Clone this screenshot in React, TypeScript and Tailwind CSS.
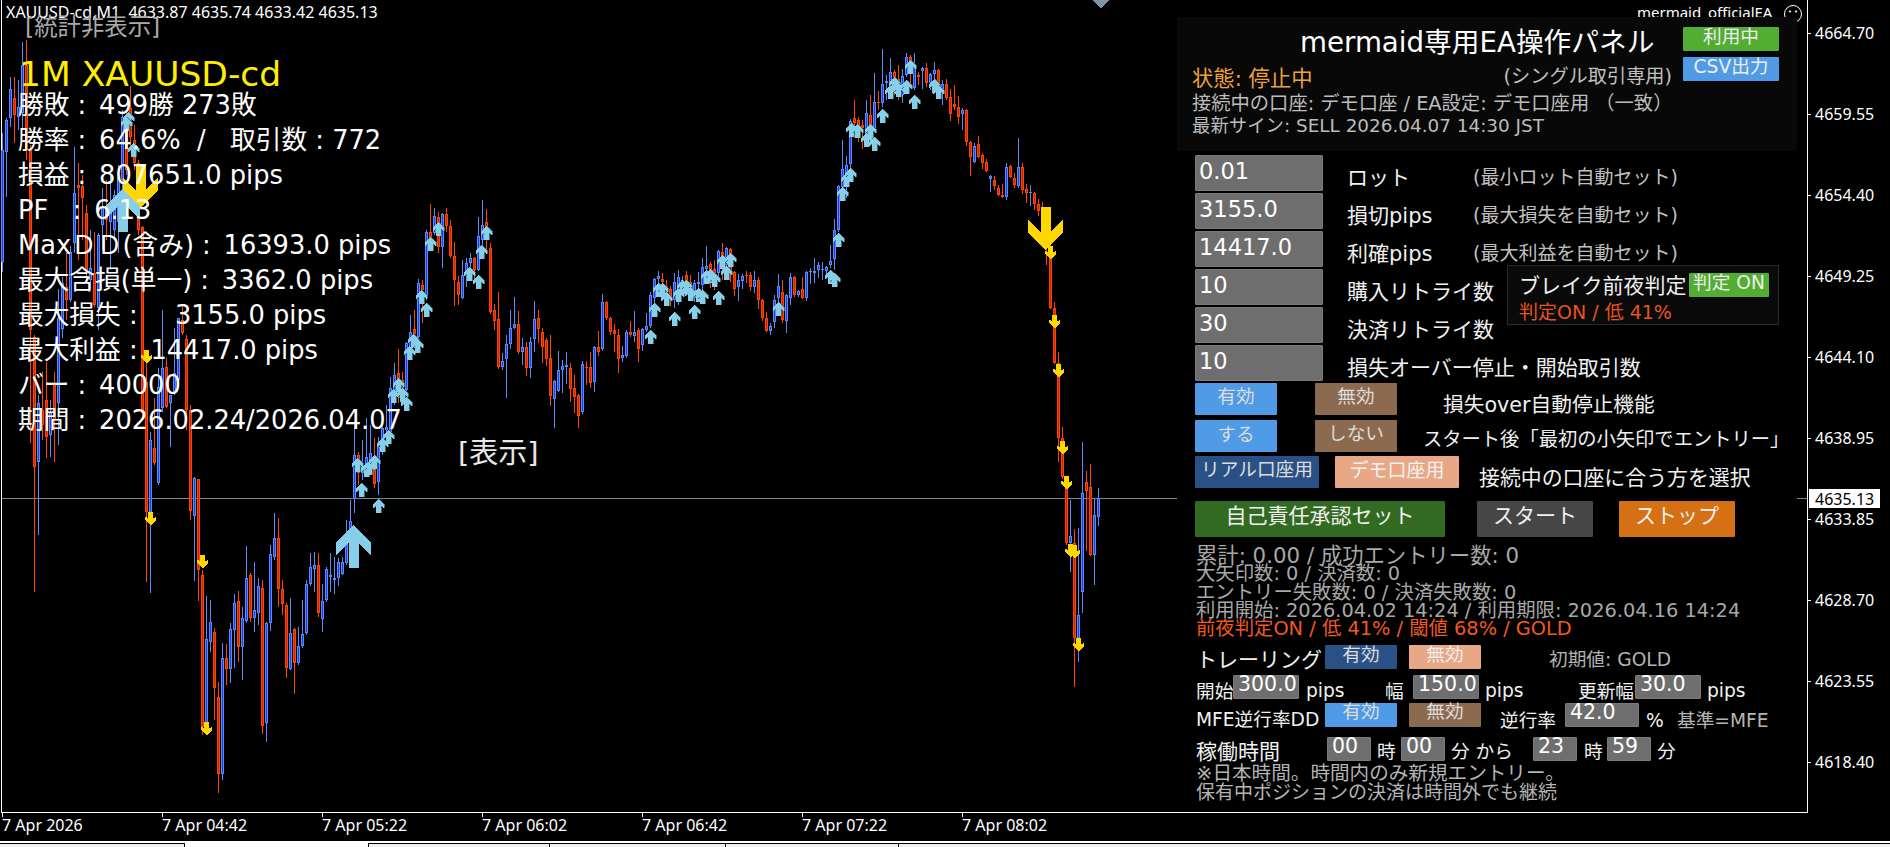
import { type ReactNode } from "react"

// x, high, body top, body bottom, low, 1 = up (blue) 0 = down (red)
const candles: number[][] = [
  [2,133,150,262,272,1],[6,118,120,152,197,1],[10,77,89,118,127,1],[14,77,98,115,143,0],[18,80,107,117,130,1],
  [22,42,65,113,130,1],[26,40,65,150,160,0],[30,145,150,330,443,0],[34,335,337,467,592,0],[38,395,403,462,535,1],
  [42,372,410,425,440,0],[46,362,400,437,458,0],[50,400,413,435,457,1],[54,372,385,420,462,0],[58,289,318,403,445,1],
  [62,277,283,329,338,1],[66,253,287,300,320,0],[70,246,252,300,302,1],[74,147,193,243,253,1],[78,163,185,188,260,0],
  [82,175,186,198,240,0],[86,205,213,270,280,0],[90,230,268,280,290,1],[94,232,273,305,307,0],[98,233,235,308,330,1],
  [102,188,208,225,250,1],[106,180,213,220,240,0],[110,170,207,222,270,1],[114,190,195,230,238,1],[118,165,177,222,253,1],
  [122,110,117,180,200,1],[126,110,130,170,175,0],[130,86,108,137,150,0],[134,125,140,163,170,0],[138,160,163,230,235,0],
  [142,226,227,413,420,0],[146,363,382,512,582,0],[150,432,440,512,593,1],[154,398,448,463,465,0],[158,368,387,483,485,1],
  [162,310,368,408,412,1],[166,358,367,407,408,0],[170,395,395,403,447,1],[174,328,373,393,395,1],[178,318,318,380,382,1],
  [182,307,320,333,335,0],[186,335,339,410,430,0],[190,405,410,511,520,0],[194,477,478,516,581,1],[198,479,479,570,601,0],
  [202,570,575,727,735,0],[206,596,639,723,728,1],[210,600,622,642,652,1],[214,628,632,688,720,0],[218,682,697,774,793,0],
  [222,643,658,774,780,1],[226,644,658,669,685,0],[230,623,629,669,683,1],[234,594,603,630,668,1],[238,591,601,647,662,0],
  [242,607,618,647,680,1],[246,546,578,621,623,1],[250,573,575,618,622,0],[254,562,610,618,632,1],[258,578,586,613,625,1],
  [262,580,588,726,734,0],[266,622,623,723,742,1],[270,545,554,623,631,1],[274,513,538,557,560,1],[278,518,538,589,607,0],
  [282,580,589,604,615,0],[286,603,605,668,678,0],[290,598,633,669,670,1],[294,628,629,663,694,0],[298,627,646,663,665,1],
  [302,600,634,646,648,1],[306,580,584,633,635,1],[310,553,567,584,586,1],[314,552,565,569,592,1],[318,553,565,613,617,0],
  [322,584,601,619,632,1],[326,567,569,600,602,1],[330,553,575,577,592,1],[334,557,578,580,594,1],[338,558,562,578,586,1],
  [342,557,562,574,575,1],[346,520,544,563,565,1],[350,500,521,545,547,1],[354,425,455,499,513,1],[358,452,455,473,485,0],
  [362,440,465,473,480,1],[366,418,457,470,472,1],[370,425,453,462,470,1],[374,438,457,484,488,0],[378,437,447,482,495,1],
  [382,427,428,443,455,1],[386,405,427,430,433,1],[390,377,388,433,435,1],[394,363,375,403,405,1],[398,349,373,383,403,0],
  [402,372,380,390,392,0],[406,342,343,390,392,1],[410,315,332,357,359,1],[414,310,329,334,336,0],[418,279,283,337,339,1],
  [422,280,285,290,323,0],[426,230,232,298,300,1],[430,204,232,238,240,0],[434,208,216,233,235,1],[438,212,217,247,253,0],
  [442,213,214,247,268,1],[446,208,214,226,232,0],[450,220,226,256,258,0],[454,242,256,280,306,0],[458,276,282,295,305,0],
  [462,260,275,298,299,1],[466,258,263,275,287,1],[470,253,258,263,280,1],[474,257,258,270,280,0],[478,217,236,270,271,1],
  [482,200,225,240,247,1],[486,209,222,239,253,0],[490,243,248,312,314,0],[494,304,310,321,330,0],[498,292,319,367,369,0],
  [502,353,361,367,370,1],[506,335,344,359,398,1],[510,310,328,344,349,1],[514,297,324,328,329,1],[518,311,324,352,354,0],
  [522,338,347,352,365,1],[526,342,347,368,376,0],[530,337,342,368,378,1],[534,301,319,339,352,1],[538,310,318,329,343,0],
  [542,328,332,347,363,0],[546,338,340,359,366,0],[550,335,358,396,406,0],[554,380,381,399,428,1],[558,351,370,391,392,1],
  [562,360,366,370,393,1],[566,352,365,367,384,1],[570,363,368,389,402,0],[574,375,388,397,413,0],[578,394,395,416,428,0],
  [582,361,364,412,414,1],[586,361,367,368,385,0],[590,352,367,383,388,0],[594,346,347,382,392,1],[598,331,347,352,356,0],
  [602,294,302,349,351,1],[606,301,302,318,320,0],[610,317,318,332,335,0],[614,324,330,334,352,0],[618,329,335,359,373,0],
  [622,346,355,358,362,1],[626,330,332,356,358,1],[630,321,332,335,337,0],[634,311,332,336,342,1],[638,328,330,349,362,0],
  [642,328,329,345,351,1],[646,313,326,330,332,1],[650,292,295,326,328,1],[654,278,279,298,312,1],[658,271,276,279,292,1],
  [662,273,279,282,295,0],[666,280,286,290,300,0],[670,286,289,300,306,0],[674,273,282,300,308,1],[678,270,277,290,305,1],
  [682,276,280,284,296,1],[686,271,275,281,293,0],[690,275,282,292,300,0],[694,280,283,298,302,1],[698,272,282,284,297,1],
  [702,258,267,285,290,1],[706,246,266,269,284,1],[710,262,264,282,288,0],[714,260,269,282,290,0],[718,250,251,273,282,1],
  [722,243,252,265,280,0],[726,247,248,265,270,1],[730,248,249,270,282,0],[734,271,272,289,296,0],[738,274,280,287,301,1],
  [742,274,276,281,289,1],[746,271,275,276,283,0],[750,272,275,287,291,0],[754,271,280,287,293,1],[758,277,280,300,309,0],
  [762,299,300,318,321,0],[766,312,318,331,332,0],[770,323,326,331,335,1],[774,295,300,322,328,1],[778,274,286,298,310,1],
  [782,280,292,320,323,0],[786,294,295,321,333,1],[790,273,277,298,305,1],[794,276,277,295,297,0],[798,290,291,295,297,1],
  [802,277,289,298,299,0],[806,271,272,298,301,1],[810,268,271,272,284,1],[814,258,271,273,283,1],[818,262,265,270,278,1],
  [822,262,269,270,280,1],[826,266,267,271,274,1],[830,245,261,265,268,1],[834,219,230,259,270,1],[838,185,186,230,232,1],
  [842,140,169,187,200,1],[846,156,165,183,198,1],[850,119,121,164,170,1],[854,100,118,123,138,0],[858,117,120,130,142,0],
  [862,120,125,128,149,0],[866,100,113,137,140,1],[870,95,115,128,135,0],[874,73,102,128,130,1],[878,91,102,103,110,0],
  [882,49,84,103,107,1],[886,75,81,83,100,1],[890,58,72,83,95,1],[894,70,72,77,95,0],[898,65,79,85,100,0],
  [902,69,76,95,103,1],[906,53,57,75,77,1],[910,55,57,62,83,0],[914,53,68,88,90,1],[918,72,75,77,85,0],
  [922,67,68,71,89,1],[926,63,68,83,87,0],[930,73,74,83,90,1],[934,62,70,74,80,1],[938,69,70,92,94,0],
  [942,80,84,90,105,1],[946,79,84,98,100,0],[950,89,97,114,121,0],[954,85,104,107,110,0],[958,96,107,117,124,0],
  [962,108,110,114,130,1],[966,109,110,142,146,0],[970,141,142,157,176,0],[974,143,146,162,163,1],[978,136,144,157,158,0],
  [982,153,155,163,169,0],[986,159,162,171,172,0],[990,175,176,179,192,1],[994,176,180,186,190,0],[998,185,188,195,196,0],
  [1002,184,195,197,198,0],[1006,163,167,197,200,1],[1010,165,166,177,178,0],[1014,173,178,185,188,0],[1018,138,167,186,188,1],
  [1022,163,167,190,194,0],[1026,184,189,193,203,0],[1030,185,192,193,206,1],[1034,192,193,204,210,0],[1038,199,204,211,216,0],
  [1042,202,211,228,232,0],[1046,222,228,248,265,0],[1050,245,250,308,309,0],[1054,302,308,363,364,0],[1058,352,363,438,462,0],
  [1062,427,438,477,479,0],[1066,476,477,543,545,0],[1070,500,536,543,572,1],[1074,529,543,638,687,0],[1078,528,615,638,662,1],
  [1082,442,493,592,613,1],[1086,471,482,491,551,0],[1090,464,487,555,556,0],[1094,498,515,555,585,1],[1098,488,498,517,526,1],
]

const upArrows: number[][] = [
  [128,112],[126,117],[133,143],[361,483],[378,499],[357,458],[366,463],[369,461],[374,455],[382,438],[388,430],
  [393,389],[398,378],[402,388],[406,397],[409,346],[413,334],[417,339],[421,290],[426,303],[430,237],[438,222],
  [469,267],[478,275],[481,245],[486,226],[650,330],[654,303],[658,283],[662,283],[666,292],[674,312],[678,288],
  [682,280],[686,280],[690,287],[694,305],[698,288],[702,290],[706,270],[710,269],[714,273],[718,291],[722,255],
  [726,266],[730,253],[778,302],[830,270],[834,273],[838,233],[842,187],[846,173],[850,168],[851,123],[857,124],
  [866,133],[870,124],[874,137],[882,109],[890,85],[894,77],[898,83],[906,80],[910,60],[914,95],[934,79],[938,85],
]

const downArrows: number[][] = [
  [146,350],[150,512],[202,555],[206,722],[1050,246],[1054,315],[1058,364],[1062,441],[1066,476],[1070,544],[1074,545],[1078,638],
]

const prices: [string, number][] = [
  ["4664.70", 33],["4659.55", 114],["4654.40", 195],["4649.25", 276],["4644.10", 357],
  ["4638.95", 438],["4633.85", 519],["4628.70", 600],["4623.55", 681],["4618.40", 762],
]

const times = ["7 Apr 2026","7 Apr 04:42","7 Apr 05:22","7 Apr 06:02","7 Apr 06:42","7 Apr 07:22","7 Apr 08:02"]

const bigUp = "0,0 17.5,17 17.5,30 5,18 5,43 -5,43 -5,18 -17.5,30 -17.5,17"
const bigDown = "-5,0 5,0 5,25 17.5,13 17.5,26 0,43 -17.5,26 -17.5,13 -5,25"
const smallUp = "0,0 5.5,5.5 5.5,9 2.5,6.5 2.5,13.5 -2.5,13.5 -2.5,6.5 -5.5,9 -5.5,5.5"
const smallDown = "-2.5,0 2.5,0 2.5,6.5 5.5,4.5 5.5,8 0,13.5 -5.5,8 -5.5,4.5 -2.5,6.5"

function ChartCanvas() {
  return (
    <svg width={1807} height={812} className="absolute left-[-2px] top-0" shapeRendering="crispEdges">
      <rect x={2} y={498} width={1805} height={1} fill="#778899" />
      <polygon points="1092,0 1110,0 1101,8" fill="#7f93a6" />
      {candles.map(([x, hi, top, bot, lo, up]) => (
        <g key={x}>
          <rect x={x} y={hi} width={1} height={lo - hi} fill={up ? "#5b8cf5" : "#ff4500"} />
          <rect x={x - 1} y={top} width={3} height={Math.max(bot - top, 1)} fill={up ? "#5b8cf5" : "#ff4500"} />
          {bot - top > 2 && <rect x={x} y={top + 1} width={1} height={bot - top - 2} fill={up ? "#1a3cff" : "#d42000"} />}
        </g>
      ))}
      <polygon points={bigDown} transform="translate(140.5 165)" fill="#ffd700" />
      <polygon points={bigDown} transform="translate(1045.5 207)" fill="#ffd700" />
      <polygon points={bigUp} transform="translate(122.5 189)" fill="#87ceeb" />
      <polygon points={bigUp} transform="translate(353.5 525)" fill="#87ceeb" />
      {downArrows.map(([x, y]) => (
        <polygon key={x} points={smallDown} transform={`translate(${x + 0.5} ${y})`} fill="#ffd700" />
      ))}
      {upArrows.map(([x, y]) => (
        <g key={`${x}-${y}`} transform={`translate(${x + 0.5} ${y})`}>
          <polygon points={smallUp} transform="translate(1 0)" fill="#3f6b5e" />
          <polygon points={smallUp} fill="#87ceeb" />
        </g>
      ))}
    </svg>
  )
}

function StatsOverlay() {
  const rows = [
    "勝敗 :\u2002499勝 273敗",
    "勝率 :\u200264.6%  /   取引数 : 772",
    "損益 :\u2002807651.0 pips",
    "PF   :\u20026.13",
    "MaxＤＤ(含み) :\u200216393.0 pips",
    "最大含損(単一) :\u20023362.0 pips",
    "最大損失 :\u2002   3155.0 pips",
    "最大利益 :\u200214417.0 pips",
    "バー :\u200240000",
    "期間 :\u20022026.02.24/2026.04.07",
  ]
  return (
    <div className="absolute left-[16px] top-[4px] text-white">
      <div className="h-[16px] text-[16px] leading-[16px] font-['Noto_Sans',sans-serif] whitespace-pre -ml-[12px]">XAUUSD-cd,M1  4633.87 4635.74 4633.42 4635.13</div>
      <div className="h-[26px] leading-[26px] -mt-[6px] ml-[7px] text-[23.4px] text-[#aaaaaa]">[統計非表示]</div>
      <div className="h-[52px] mt-[9px] -mb-[13px] ml-px flex items-center text-[34.5px] text-[#ffee00] whitespace-pre">1M XAUUSD-cd</div>
      <div className="flex flex-col text-[25.7px]">
        {rows.map((row) => (
          <div key={row} className="h-[35px] flex items-center whitespace-pre">{row}</div>
        ))}
      </div>
    </div>
  )
}

function Field({ value, w, tall }: { value: string; w: string; tall?: boolean }) {
  return (
    <div className={`${w} ${tall ? "h-[36px] pb-[4px] pl-[3px] text-[22.5px]" : "h-[24px] pb-[7px] pl-[4px] text-[20.5px]"} shrink-0 flex items-center bg-[#6e6e6e] border border-[#7a7a7a] rounded-[1px] text-white leading-none`}>{value}</div>
  )
}

function Btn({ children, cls }: { children: ReactNode; cls: string }) {
  return (
    <div className={`${cls} shrink-0 flex items-center justify-center rounded-[1px] leading-none whitespace-nowrap`}>{children}</div>
  )
}

function InputRow({ value, label, note }: { value: string; label: string; note?: string }) {
  return (
    <div className="flex h-[36px] mb-[2px]">
      <Field value={value} w="w-[128px]" tall />
      <div className="ml-[24px] w-[126px] pt-[12px] text-[21px] leading-[22px] text-[#f0f0f0] whitespace-nowrap">{label}</div>
      {note && <div className="pt-[11px] text-[19px] leading-[22px] text-[#c0c0c0] whitespace-nowrap">{note}</div>}
    </div>
  )
}

function ControlPanel() {
  return (
    <div className="absolute left-[1175px] top-[17px] w-[620px] h-[795px] bg-black">
      <div className="h-[134px] bg-[#080808] flex">
        <div className="w-[506px] pl-[15px]">
          <div className="h-[52px] pl-[108px] flex items-center text-[27.7px] text-white whitespace-nowrap">mermaid専用EA操作パネル</div>
          <div className="h-[20px] flex items-center justify-between pr-[11px] whitespace-nowrap">
            <span className="text-[21.33px] text-[#eda23c] leading-none">状態: 停止中</span>
            <span className="text-[19.2px] text-[#c0c0c0] leading-none -mt-[5px]">(シングル取引専用)</span>
          </div>
          <div className="h-[22px] mt-[4px] flex items-center text-[19.3px] text-[#bcbcbc] whitespace-pre">接続中の口座: デモ口座 / EA設定: デモ口座用 （一致）</div>
          <div className="h-[22px] flex items-center text-[18.4px] text-[#bcbcbc] whitespace-nowrap">最新サイン: SELL 2026.04.07 14:30 JST</div>
        </div>
        <div className="pt-[10px] flex flex-col gap-[6px] text-[18.67px] text-[#eeeeee]">
          <Btn cls="w-[96px] h-[24px] pb-[3px] bg-[#52ad32]">利用中</Btn>
          <Btn cls="w-[96px] h-[24px] pb-[3px] bg-[#4f9be6]">CSV出力</Btn>
        </div>
      </div>

      <div className="mt-[4px] pl-[18px]">
        <InputRow value="0.01" label="ロット" note="(最小ロット自動セット)" />
        <InputRow value="3155.0" label="損切pips" note="(最大損失を自動セット)" />
        <InputRow value="14417.0" label="利確pips" note="(最大利益を自動セット)" />
        <div className="flex">
          <div className="w-[312px] shrink-0">
            <InputRow value="10" label="購入リトライ数" />
            <InputRow value="30" label="決済リトライ数" />
            <InputRow value="10" label="損失オーバー停止・開始取引数" />
          </div>
          <div className="h-[60px] w-[272px] -mt-[4px] border border-[#2a2a2a] bg-[#0a0a0a] pl-[11px] pt-[7px]">
            <div className="flex items-center h-[24px]">
              <span className="w-[170px] pt-[2px] text-[21px] leading-none text-[#f0f0f0] whitespace-nowrap">ブレイク前夜判定</span>
              <Btn cls="w-[80px] h-[24px] pb-[3px] bg-[#52ad32] text-[18.67px] text-[#eeeeee]">判定 ON</Btn>
            </div>
            <div className="h-[24px] mt-[3px] flex items-center text-[19px] text-[#e8531f] whitespace-nowrap">判定ON / 低 41%</div>
          </div>
        </div>
      </div>

      <div className="pl-[18px] flex flex-col gap-[4px] text-[18.67px] text-[#dddddd]">
        <div className="flex">
          <Btn cls="w-[82px] h-[32px] pb-[4px] bg-[#4f9be6]">有効</Btn>
          <Btn cls="w-[82px] h-[32px] pb-[4px] ml-[38px] bg-[#8c6a50]">無効</Btn>
          <span className="ml-[46px] pt-[11px] text-[20.7px] leading-[22px] text-[#f0f0f0] whitespace-nowrap">損失over自動停止機能</span>
        </div>
        <div className="flex">
          <Btn cls="w-[82px] h-[32px] pb-[2px] bg-[#4f9be6]">する</Btn>
          <Btn cls="w-[82px] h-[32px] pb-[4px] ml-[38px] bg-[#8c6a50]">しない</Btn>
          <span className="ml-[26px] pt-[9px] text-[19.3px] leading-[22px] text-[#f0f0f0] whitespace-nowrap">スタート後「最初の小矢印でエントリー」</span>
        </div>
        <div className="flex">
          <Btn cls="w-[124px] h-[32px] pb-[4px] bg-[#2a5186]">リアル口座用</Btn>
          <Btn cls="w-[124px] h-[32px] pb-[4px] ml-[16px] bg-[#e8a885] text-[#f2f2f2] text-[19px]">デモ口座用</Btn>
          <span className="ml-[20px] pt-[11px] text-[20.9px] leading-[22px] text-[#f0f0f0] whitespace-nowrap">接続中の口座に合う方を選択</span>
        </div>
      </div>

      <div className="mt-[12px] pl-[18px] flex text-[21px] text-[#f0f0f0]">
        <Btn cls="w-[250px] h-[36px] pb-[5px] bg-[#326a22]">自己責任承認セット</Btn>
        <Btn cls="w-[116px] h-[36px] pb-[5px] ml-[32px] bg-[#464646]">スタート</Btn>
        <Btn cls="w-[116px] h-[36px] pb-[5px] ml-[26px] bg-[#d67014]">ストップ</Btn>
      </div>

      <div className="mt-[10px] pl-[19px] flex flex-col text-[19.35px] text-[#a8a8a8] whitespace-nowrap">
        <div className="h-[18.25px] leading-[18px] text-[21.33px]">累計: 0.00 / 成功エントリー数: 0</div>
        <div className="h-[18.25px] leading-[18px]">大矢印数: 0 / 決済数: 0</div>
        <div className="h-[18.25px] leading-[18px]">エントリー失敗数: 0 / 決済失敗数: 0</div>
        <div className="h-[18.25px] leading-[18px]">利用開始: 2026.04.02 14:24 / 利用期限: 2026.04.16 14:24</div>
        <div className="h-[18.25px] leading-[18px] text-[#f05a1e]">前夜判定ON / 低 41% / 閾値 68% / GOLD</div>
      </div>

      <div className="mt-[7px] pl-[19px] text-[18.67px] text-[#f0f0f0] whitespace-nowrap">
        <div className="flex h-[24px]">
          <span className="w-[129px] pt-[3px] text-[21px] leading-[24px]">トレーリング</span>
          <Btn cls="w-[72px] h-[24px] pb-[4px] bg-[#2a5186] text-[#dddddd]">有効</Btn>
          <Btn cls="w-[72px] h-[24px] pb-[4px] ml-[12px] bg-[#e8a885] text-[#eeeeee]">無効</Btn>
          <span className="ml-[68px] pt-[3px] leading-[24px] text-[#b4b4b4]">初期値: GOLD</span>
        </div>
        <div className="flex h-[24px] mt-[6px]">
          <span className="w-[37px] pt-[5px] leading-[24px]">開始</span>
          <Field value="300.0" w="w-[66px]" />
          <span className="w-[79px] ml-[7px] pt-[4px] leading-[24px]">pips</span>
          <span className="w-[28px] pt-[5px] leading-[24px]">幅</span>
          <Field value="150.0" w="w-[66px]" />
          <span className="w-[93px] ml-[6px] pt-[4px] leading-[24px]">pips</span>
          <span className="w-[57px] pt-[5px] leading-[24px]">更新幅</span>
          <Field value="30.0" w="w-[66px]" />
          <span className="ml-[6px] pt-[4px] leading-[24px]">pips</span>
        </div>
        <div className="flex h-[24px] mt-[4px]">
          <span className="w-[129px] pt-[5px] leading-[24px]">MFE逆行率DD</span>
          <Btn cls="w-[72px] h-[24px] pb-[5px] bg-[#4f9be6] text-[#dddddd]">有効</Btn>
          <Btn cls="w-[72px] h-[24px] pb-[5px] ml-[12px] bg-[#8c6a50] text-[#dddddd]">無効</Btn>
          <span className="w-[65px] ml-[19px] pt-[6px] leading-[24px]">逆行率</span>
          <Field value="42.0" w="w-[74px]" />
          <span className="w-[31px] ml-[7px] pt-[6px] leading-[24px]">%</span>
          <span className="pt-[6px] leading-[24px] text-[#b4b4b4]">基準=MFE</span>
        </div>
        <div className="flex h-[24px] mt-[10px]">
          <span className="w-[131px] pt-[3px] text-[21px] leading-[24px]">稼働時間</span>
          <Field value="00" w="w-[44px]" />
          <span className="w-[24px] ml-[6px] pt-[3px] leading-[24px]">時</span>
          <Field value="00" w="w-[44px]" />
          <span className="w-[82px] ml-[6px] pt-[3px] leading-[24px]">分 から</span>
          <Field value="23" w="w-[44px]" />
          <span className="w-[23px] ml-[7px] pt-[3px] leading-[24px]">時</span>
          <Field value="59" w="w-[44px]" />
          <span className="ml-[6px] pt-[3px] leading-[24px]">分</span>
        </div>
        <div className="mt-[3px] text-[19.6px] text-[#b4b4b4]">
          <div className="h-[19px] leading-[19px]">※日本時間。時間内のみ新規エントリー。</div>
          <div className="h-[19px] leading-[19px] text-[19px]">保有中ポジションの決済は時間外でも継続</div>
        </div>
      </div>
    </div>
  )
}

function PriceAxis() {
  return (
    <div className="relative w-[82px] h-[813px] text-[16px] text-white font-['Noto_Sans',sans-serif]">
      {prices.map(([label, y]) => (
        <div key={label} className="absolute left-0 flex items-center h-[20px]" style={{ top: y - 10 }}>
          <span className="w-[3px] h-px bg-white" />
          <span className="ml-[4px] leading-none">{label}</span>
        </div>
      ))}
      <div className="absolute left-px top-[489px] w-[71px] h-[19px] bg-white text-black flex items-center pl-[6px] leading-none">4635.13</div>
    </div>
  )
}

export default function App() {
  return (
    <div className="w-[1890px] h-[847px] overflow-hidden bg-black font-['DejaVu_Sans','Noto_Sans_CJK_JP',sans-serif]">
      <div className="flex">
        <div className="relative ml-px w-[1807px] h-[813px] border-l border-r border-b border-white">
          <ChartCanvas />
          <StatsOverlay />
          <div className="absolute left-[456px] top-[435px] text-[29px] leading-[36px] text-[#e8e8e8] whitespace-nowrap">[表示]</div>
          <div className="absolute left-[1635px] top-[4px] text-[15px] leading-[16px] text-white font-['Noto_Sans',sans-serif]">mermaid_officialEA</div>
          <svg width={20} height={20} className="absolute left-[1781px] top-[4px]" viewBox="0 0 20 20" fill="none" stroke="#ffffff">
            <circle cx={10} cy={10} r={8.5} />
            <circle cx={7} cy={7.5} r={0.7} fill="#ffffff" />
            <circle cx={13} cy={7.5} r={0.7} fill="#ffffff" />
          </svg>
          <ControlPanel />
        </div>
        <PriceAxis />
      </div>

      <div className="flex h-[28px] pl-[2px] text-[16px] text-white font-['Noto_Sans',sans-serif]">
        {times.map((t) => (
          <div key={t} className="w-[160px] flex flex-col">
            <div className="w-px h-[4px] bg-white" />
            <div className="h-[20px] -mt-[2px] leading-[20px] whitespace-nowrap">{t}</div>
          </div>
        ))}
      </div>

      <div className="h-[2px] bg-white" />
      <div className="flex h-[4px] bg-[#f0f0f0]">
        <div className="w-[185px] border-t border-r border-black" />
        <div className="w-[183px] bg-white" />
        <div className="w-[181px] border-t border-l border-black" />
        <div className="w-[176px] border-t border-l border-black" />
        <div className="w-[173px] border-t border-l border-black" />
        <div className="flex-1 border-t border-l border-black" />
      </div>
    </div>
  )
}
